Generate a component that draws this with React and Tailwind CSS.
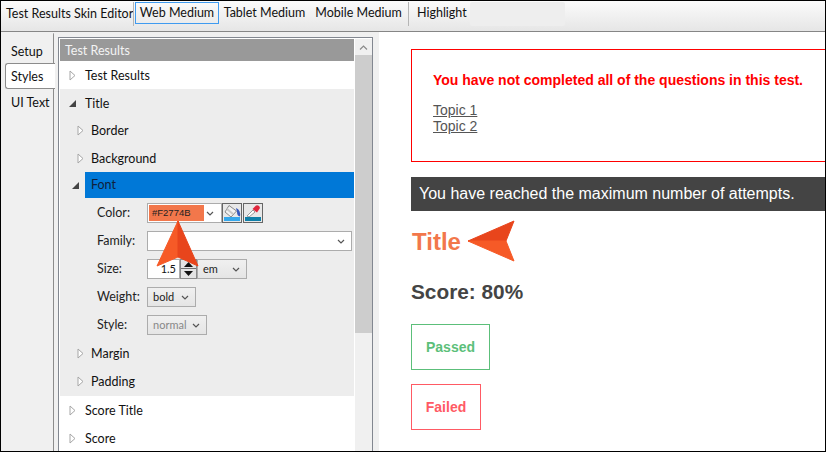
import React from 'react';

const uiFont = "font-['Lato',sans-serif]";

const Collapsed = () => (
  <svg width="7" height="11" viewBox="0 0 7 11" className="shrink-0">
    <path d="M1 1 L1 10 L6 5.5 Z" fill="#fff" stroke="#a6a6a6" strokeWidth="1" />
  </svg>
);

const Expanded = () => (
  <svg width="7" height="7" viewBox="0 0 7 7" className="shrink-0">
    <path d="M7 0 L7 7 L0 7 Z" fill="#444" />
  </svg>
);

const Chevron = ({ color = '#555' }) => (
  <svg width="8" height="5" viewBox="0 0 8 5" className="shrink-0">
    <path d="M1 1 L4 4 L7 1" fill="none" stroke={color} strokeWidth="1.2" />
  </svg>
);

const TreeRow = ({ label, open, indent }) => (
  <div className={`flex h-7 items-center ${indent ? 'pl-[17px]' : 'pl-[9px]'}`}>
    <div className="flex w-4 items-center">{open ? <Expanded /> : <Collapsed />}</div>
    <span className={`${indent ? 'ml-[-2px]' : 'ml-0'} pt-[2px] text-[12.5px]`}>{label}</span>
  </div>
);

const SelectBox = ({ value, width, disabled }) => (
  <div
    className={`flex h-5 items-center justify-between border border-[#acacac] bg-gradient-to-b from-[#f0f0f0] to-[#e5e5e5] pl-[5px] pr-[6px] text-[11px] ${width} ${
      disabled ? 'text-[#888]' : 'text-[#222]'
    }`}
  >
    <span>{value}</span>
    <Chevron />
  </div>
);

const FieldRow = ({ label, children, className }) => (
  <div className={`flex items-center ${className}`}>
    <span className="w-[50px] pt-px text-[12.5px] text-[#222]">{label}</span>
    {children}
  </div>
);

const BucketIcon = () => (
  <svg width="18" height="18" viewBox="0 0 18 18">
    <rect x="0" y="0" width="18" height="18" fill="#e8e8e8" />
    <path d="M6 1.5 L2 8 L8 13 L13.5 7 Z" fill="#f2f2f2" stroke="#8a8a8a" />
    <path d="M4 5 L10 10" stroke="#c8c8c8" strokeWidth="2" />
    <path d="M13 4 Q18 6 17 12.5 Q14 12 14 8 Z" fill="#3558bd" />
    <rect x="1" y="13" width="16" height="4" fill="#35a8ec" />
  </svg>
);

const DropperIcon = () => (
  <svg width="18" height="18" viewBox="0 0 18 18">
    <rect x="0" y="0" width="18" height="18" fill="#e8e8e8" />
    <path d="M3 12 L9 6 L11 8 L5 13 Z" fill="#fff" stroke="#9a9a9a" />
    <path d="M8.5 5 L12 1.5 Q15.5 0.5 16 4 L13 8.5 Z" fill="#e0263c" />
    <rect x="1" y="13" width="16" height="4" fill="#0f7fa8" />
  </svg>
);

const ToolbarButton = ({ children, active, width }) => (
  <div
    className={`flex h-[22px] items-center justify-center whitespace-nowrap border pt-px text-[12.5px] ${width} ${
      active ? 'border-[#3f9bf0]' : 'border-transparent'
    }`}
  >
    {children}
  </div>
);

const ToolbarDivider = () => <div className="mx-[1px] h-[24px] w-px bg-[#b5b5b5]" />;

export default function App() {
  return (
    <div className={`relative flex h-[452px] w-[826px] flex-col overflow-hidden border border-black bg-white text-[#111] ${uiFont}`}>
      {/* Toolbar */}
      <div className="flex h-[31px] shrink-0 items-start border-b border-[#868686] bg-gradient-to-b from-[#fbfbfb] to-[#e6e6e6] pt-[1px]">
        <div className="flex h-[24px] w-[131px] items-center whitespace-nowrap pl-[5px] pt-px text-[12.5px]">Test Results Skin Editor</div>
        <ToolbarDivider />
        <ToolbarButton active width="w-[84px]">Web Medium</ToolbarButton>
        <ToolbarButton width="w-[91px]">Tablet Medium</ToolbarButton>
        <ToolbarButton width="w-[97px]">Mobile Medium</ToolbarButton>
        <ToolbarDivider />
        <div className="flex h-[22px] w-[59px] items-center whitespace-nowrap pl-[7px] pt-px text-[12.5px]">Highlight</div>
        <div className="ml-[1px] h-[24px] w-[95px] rounded-[2px] bg-[#eeeeee]" />
      </div>

      <div className="flex min-h-0 flex-1">
        {/* Side tabs */}
        <div className="flex w-[52px] shrink-0 flex-col bg-[#f0f0f0] pt-[6px] text-[12.5px]">
          <div className="flex h-[25px] items-center pl-[10px] pt-[3px]">Setup</div>
          <div className="relative z-10 ml-[4px] mr-[-2px] flex h-[26px] items-center rounded-l-[3px] border border-r-0 border-[#8c8c8c] bg-white pl-[5px] pt-[3px]">
            Styles
          </div>
          <div className="flex h-[26px] items-center whitespace-nowrap pl-[10px] pt-[2px]">UI Text</div>
        </div>

        {/* Tab panel */}
        <div className="flex min-w-0 flex-1 rounded-tl-[3px] border-l border-[#8c8c8c]">
          <div className="w-[325px] shrink-0 bg-[#f0f0f0] pl-[4px] pt-[5px]">
            <div className="flex h-[420px] w-[315px] border border-[#828790] bg-white pl-[1px] pt-[1px]">
              <div className="w-[294px] shrink-0">
                <div className="flex h-[22px] items-center bg-[#999999] pl-[5px] pt-[2px] text-[12.5px] text-[#f4f4f4]">Test Results</div>
                <TreeRow label="Test Results" />
                <div className="bg-[#ededed] pb-px">
                  <TreeRow label="Title" open />
                  <div className="mt-[-1px]">
                    <TreeRow label="Border" indent />
                    <TreeRow label="Background" indent />
                  </div>
                  <div className="flex h-[26px] items-center pl-[12px]">
                    <div className="flex w-[13px] items-center"><Expanded /></div>
                    <div className="flex h-full flex-1 items-center bg-[#0078d7] pl-[6px] pt-px text-[12.5px] text-[#10213a]">Font</div>
                  </div>
                  <div className="flex flex-col pl-[37px] pt-[5px]">
                    <FieldRow label="Color:">
                      <div className="flex h-5 w-[75px] items-center justify-between border border-[#acacac] bg-white pl-px pr-[7px]">
                        <div className="flex h-4 w-[55px] items-center bg-[#F2774B] pl-[3px] font-['Liberation_Sans',sans-serif] text-[9.5px] text-[#222]">#F2774B</div>
                        <Chevron />
                      </div>
                      <div className="h-5 w-5 border border-[#666]"><BucketIcon /></div>
                      <div className="ml-px h-5 w-5 border border-[#666]"><DropperIcon /></div>
                    </FieldRow>
                    <FieldRow label="Family:" className="mt-[8px]">
                      <div className="flex h-5 w-[205px] items-center justify-end border border-[#acacac] bg-white pr-[6px]">
                        <Chevron />
                      </div>
                    </FieldRow>
                    <FieldRow label="Size:" className="mt-[8px]">
                      <div className="flex h-5 w-[33px] items-center justify-end border border-[#acacac] bg-white pr-[3px] text-[11px]">1.5</div>
                      <div className="flex h-5 w-[17px] flex-col border border-[#8a8a8a] bg-[#e4e4e4]">
                        <div className="flex h-[9px] items-center justify-center border-b border-[#707070]">
                          <svg width="9" height="5" viewBox="0 0 9 5"><path d="M0 5 L9 5 L4.5 0 Z" fill="#111" /></svg>
                        </div>
                        <div className="flex flex-1 items-center justify-center">
                          <svg width="9" height="5" viewBox="0 0 9 5"><path d="M0 0 L9 0 L4.5 5 Z" fill="#111" /></svg>
                        </div>
                      </div>
                      <SelectBox value="em" width="w-[50px]" />
                    </FieldRow>
                    <FieldRow label="Weight:" className="mt-[8px]">
                      <SelectBox value="bold" width="w-[49px]" />
                    </FieldRow>
                    <FieldRow label="Style:" className="mt-[8px]">
                      <SelectBox value="normal" width="w-[60px]" disabled />
                    </FieldRow>
                  </div>
                  <div className="mt-[4px]">
                    <TreeRow label="Margin" indent />
                    <TreeRow label="Padding" indent />
                  </div>
                </div>
                <TreeRow label="Score Title" />
                <TreeRow label="Score" />
              </div>

              {/* Scrollbar */}
              <div className="ml-px flex w-[17px] flex-col items-center bg-[#f0f0f0]">
                <div className="flex h-[16px] items-center justify-center">
                  <svg width="9" height="5" viewBox="0 0 9 5"><path d="M1 4.5 L4.5 1 L8 4.5" fill="none" stroke="#8a8a8a" strokeWidth="1.2" /></svg>
                </div>
                <div className="h-[278px] w-full bg-[#cdcdcd]" />
              </div>
            </div>
          </div>

          {/* Preview */}
          <div className="min-w-0 flex-1 overflow-hidden bg-white pl-[32px] pt-[17px] font-['Liberation_Sans',sans-serif]">
            <div className="h-[113px] w-[500px] border border-[#ff0000] pl-[21px] pt-[22px]">
              <p className="text-[14px] leading-[16px] font-bold text-[#ff0000]">You have not completed all of the questions in this test.</p>
              <div className="mt-[14px] text-[14px] leading-[16px] text-[#555] underline">
                <p>Topic 1</p>
                <p>Topic 2</p>
              </div>
            </div>
            <div className="mt-[15px] flex h-[34px] w-[500px] items-center bg-[#444444] pl-[8px] text-[16px] text-white">
              You have reached the maximum number of attempts.
            </div>
            <p className="mt-[17px] h-[28px] pl-px text-[24px] leading-[28px] font-bold text-[#F2774B]">Title</p>
            <p className="mt-[24px] h-[23px] text-[20.8px] leading-[23px] font-bold text-[#444444]">Score: 80%</p>
            <div className="mt-[21px] flex h-[46px] w-[79px] items-center justify-center border border-[#5cbf7a] text-[14px] font-bold text-[#5cbf7a]">Passed</div>
            <div className="mt-[14px] flex h-[46px] w-[70px] items-center justify-center border border-[#ff5a64] text-[14px] font-bold text-[#ff5a64]">Failed</div>
          </div>
        </div>
      </div>

      {/* Callout arrows */}
      <svg width="44" height="48" viewBox="0 0 44 48" className="absolute left-[155px] top-[219px]">
        <path d="M22 1 L22 37 L1 46 Z" fill="#f65a27" stroke="#f65a27" strokeLinejoin="round" />
        <path d="M22 1 L22 37 L42 46 Z" fill="#e8451c" stroke="#e8451c" strokeLinejoin="round" />
      </svg>
      <svg width="50" height="42" viewBox="0 0 50 42" className="absolute left-[466px] top-[219px]">
        <path d="M1 21 L39 21 L47 1 Z" fill="#e8451c" stroke="#e8451c" strokeLinejoin="round" />
        <path d="M1 21 L39 21 L47 41 Z" fill="#f65a27" stroke="#f65a27" strokeLinejoin="round" />
      </svg>
    </div>
  );
}
